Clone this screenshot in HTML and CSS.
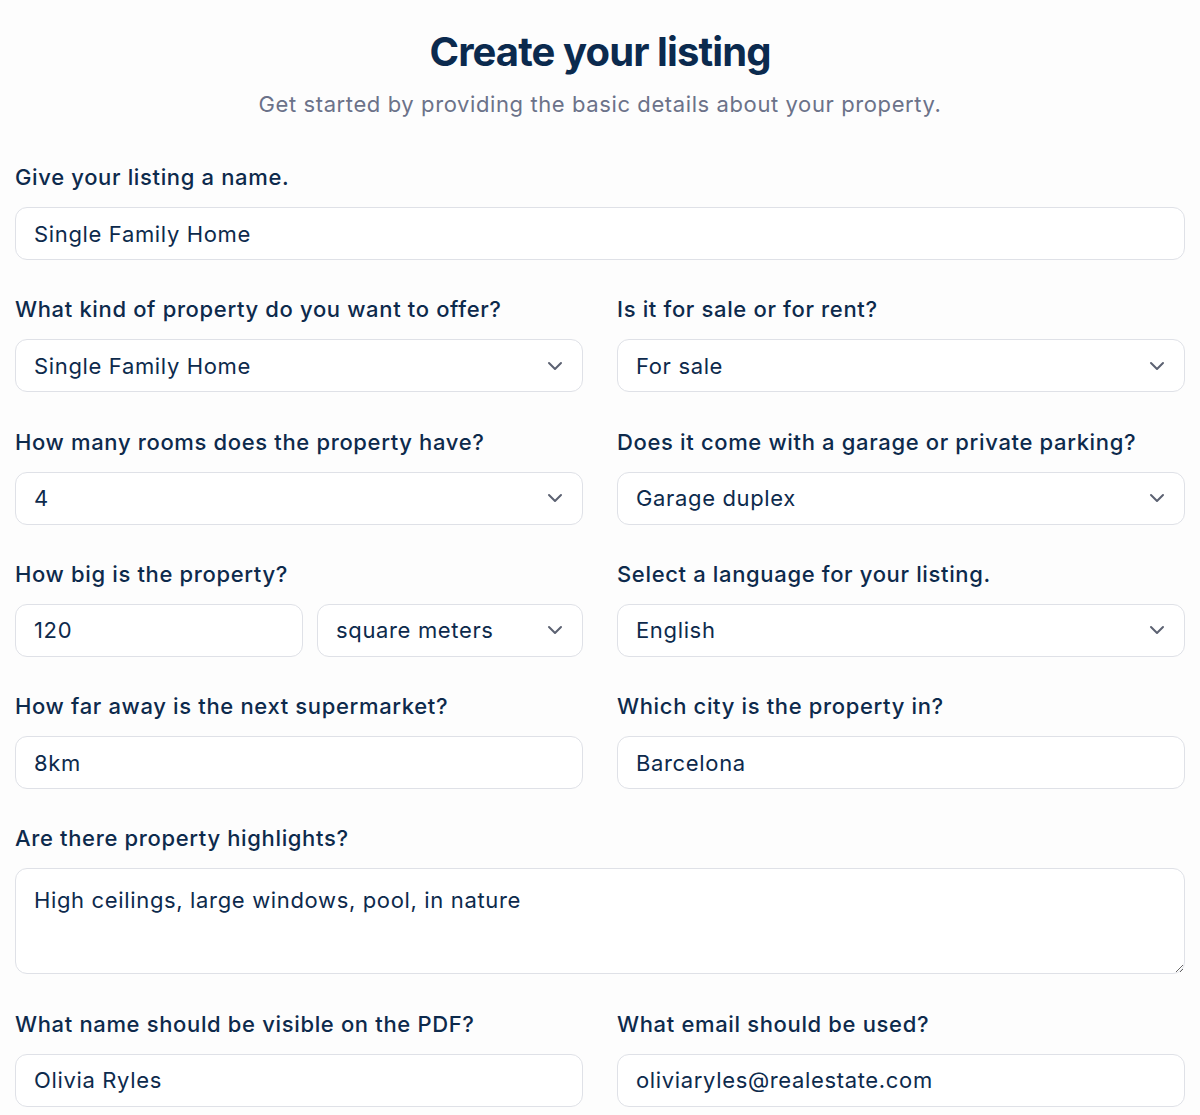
FILE: index.html
```html
<!DOCTYPE html>
<html lang="en">
<head>
<meta charset="utf-8">
<title>Create your listing</title>
<link rel="stylesheet" href="styles.css">
</head>
<body>
<main class="page">
  <header class="intro">
    <h1 class="title">Create your listing</h1>
    <p class="subtitle">Get started by providing the basic details about your property.</p>
  </header>
  <form class="form">
    <div class="field span-2">
      <label class="label">Give your listing a name.</label>
      <input class="control" type="text" value="Single Family Home">
    </div>

    <div class="field">
      <label class="label">What kind of property do you want to offer?</label>
      <div class="control select"><span>Single Family Home</span><svg class="chev" viewBox="0 0 16 10" width="16" height="10"><path d="M2 2l6 6 6-6"/></svg></div>
    </div>
    <div class="field">
      <label class="label">Is it for sale or for rent?</label>
      <div class="control select"><span>For sale</span><svg class="chev" viewBox="0 0 16 10" width="16" height="10"><path d="M2 2l6 6 6-6"/></svg></div>
    </div>

    <div class="field">
      <label class="label">How many rooms does the property have?</label>
      <div class="control select"><span>4</span><svg class="chev" viewBox="0 0 16 10" width="16" height="10"><path d="M2 2l6 6 6-6"/></svg></div>
    </div>
    <div class="field">
      <label class="label">Does it come with a garage or private parking?</label>
      <div class="control select"><span>Garage duplex</span><svg class="chev" viewBox="0 0 16 10" width="16" height="10"><path d="M2 2l6 6 6-6"/></svg></div>
    </div>

    <div class="field">
      <label class="label">How big is the property?</label>
      <div class="pair">
        <input class="control" type="text" value="120">
        <div class="control select"><span>square meters</span><svg class="chev" viewBox="0 0 16 10" width="16" height="10"><path d="M2 2l6 6 6-6"/></svg></div>
      </div>
    </div>
    <div class="field">
      <label class="label">Select a language for your listing.</label>
      <div class="control select"><span>English</span><svg class="chev" viewBox="0 0 16 10" width="16" height="10"><path d="M2 2l6 6 6-6"/></svg></div>
    </div>

    <div class="field">
      <label class="label">How far away is the next supermarket?</label>
      <input class="control" type="text" value="8km">
    </div>
    <div class="field">
      <label class="label">Which city is the property in?</label>
      <input class="control" type="text" value="Barcelona">
    </div>

    <div class="field span-2">
      <label class="label">Are there property highlights?</label>
      <textarea class="control area">High ceilings, large windows, pool, in nature</textarea>
    </div>

    <div class="field">
      <label class="label">What name should be visible on the PDF?</label>
      <input class="control" type="text" value="Olivia Ryles">
    </div>
    <div class="field">
      <label class="label">What email should be used?</label>
      <input class="control" type="text" value="oliviaryles@realestate.com">
    </div>
  </form>
</main>
</body>
</html>
```

FILE: styles.css
```css
* { box-sizing: border-box; }

html, body {
  margin: 0;
  background: #fdfdfd;
}

body {
  font-family: Inter, "Noto Sans", "Liberation Sans", sans-serif;
  color: #0d2a4c;
}

.page {
  padding: 28px 15px 0;
}

.intro {
  text-align: center;
}

.title {
  margin: 0;
  font-size: 40px;
  line-height: 48px;
  font-weight: 700;
  letter-spacing: -0.9px;
  color: #0b2a4e;
}

.subtitle {
  margin: 12px 0 0;
  font-size: 22px;
  line-height: 32px;
  letter-spacing: 0.6px;
  color: #6b7289;
}

.form {
  margin-top: 41px;
  display: grid;
  grid-template-columns: 1fr 1fr;
  column-gap: 34px;
  row-gap: 33.3px;
}

.span-2 { grid-column: 1 / -1; }

.field {
  display: flex;
  flex-direction: column;
}

.label {
  font-size: 22px;
  line-height: 32px;
  font-weight: 500;
  letter-spacing: 0.65px;
  margin-bottom: 14px;
  color: #0d2a4c;
}

.control {
  height: 53px;
  width: 100%;
  border: 1px solid #dfe1e7;
  border-radius: 12px;
  background: #fff;
  font-family: inherit;
  font-size: 22px;
  letter-spacing: 0.65px;
  color: #0d2a4c;
  padding: 0 18px;
  outline: none;
  margin: 0;
}

.select {
  display: flex;
  align-items: center;
  justify-content: space-between;
  padding-right: 19px;
}

.chev {
  fill: none;
  stroke: #5c6272;
  stroke-width: 2;
  stroke-linecap: round;
  stroke-linejoin: round;
}

.pair {
  display: grid;
  grid-template-columns: 288px 1fr;
  gap: 14px;
}

.area {
  height: 106px;
  padding: 15px 18px;
  line-height: 32px;
  resize: vertical;
  display: block;
}
```
